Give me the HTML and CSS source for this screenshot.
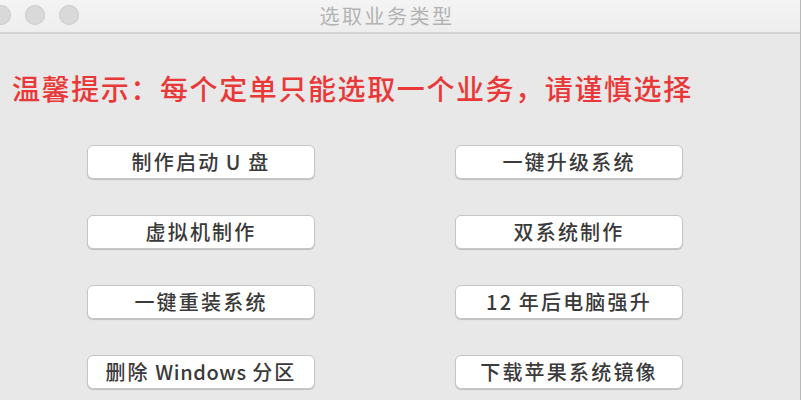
FILE: index.html
```html
<!DOCTYPE html>
<html lang="zh">
<head>
<meta charset="utf-8">
<title>选取业务类型</title>
<link rel="stylesheet" href="styles.css">
</head>
<body>
<div class="window">
  <header class="titlebar">
    <div class="lights">
      <span class="light"></span>
      <span class="light"></span>
      <span class="light"></span>
    </div>
    <div class="title">选取业务类型</div>
    <div class="spacer"></div>
  </header>
  <main class="content">
    <p class="tip">温馨提示：每个定单只能选取一个业务，请谨慎选择</p>
    <div class="grid">
      <button class="btn">制作启动&#8198;U&#8198;盘</button>
      <button class="btn">一键升级系统</button>
      <button class="btn">虚拟机制作</button>
      <button class="btn">双系统制作</button>
      <button class="btn">一键重装系统</button>
      <button class="btn">12&#8198;年后电脑强升</button>
      <button class="btn">删除&#8198;<span class="latin">Windows</span>&#8198;分区</button>
      <button class="btn">下载苹果系统镜像</button>
    </div>
  </main>
</div>
</body>
</html>
```
FILE: styles.css
```css
html, body {
  margin: 0;
  padding: 0;
  width: 801px;
  height: 400px;
  overflow: hidden;
  background: #e8e8e8;
  font-family: "Noto Sans CJK SC", "Noto Sans", sans-serif;
}
.window {
  width: 801px;
  height: 400px;
  background: #e8e8e8;
  border-right: 1px solid #b8b8b8;
  box-sizing: border-box;
}
.titlebar {
  height: 32px;
  display: grid;
  grid-template-columns: 1fr auto 1fr;
  align-items: center;
  padding-right: 26px;
  background: linear-gradient(#f4f4f4, #eeeeee);
  border-bottom: 2px solid #d2d2d2;
}
.lights {
  display: flex;
  gap: 14px;
  margin-left: -9px;
  margin-top: -2px;
}
.light {
  width: 20px;
  height: 20px;
  border-radius: 50%;
  background: #d9d9d9;
  box-shadow: inset 0 0 0 1px #cfcfcf;
}
.title {
  font-size: 20px;
  letter-spacing: 2.5px;
  color: #b3b3b3;
  line-height: 32px;
  margin-top: -1px;
}
.content {
  padding-top: 36px;
}
.tip {
  margin: 0 0 0 12px;
  font-size: 28px;
  line-height: 36px;
  letter-spacing: 1.6px;
  font-weight: 500;
  color: #e83838;
  white-space: nowrap;
}
.grid {
  display: grid;
  grid-template-columns: 228px 228px;
  column-gap: 140px;
  row-gap: 36px;
  padding-left: 87px;
  margin-top: 39px;
}
.btn {
  height: 34px;
  padding: 0;
  background: #ffffff;
  border: 1px solid #c6c6c6;
  border-radius: 6px;
  box-shadow: 0 1px 1px rgba(0,0,0,0.18);
  font-family: "Noto Sans CJK SC", "Noto Sans", sans-serif;
  font-size: 20px;
  font-weight: 500;
  letter-spacing: 2.2px;
  color: #3a3a3a;
  line-height: 32px;
  text-align: center;
  white-space: nowrap;
}
.latin {
  letter-spacing: 0.6px;
}
```
